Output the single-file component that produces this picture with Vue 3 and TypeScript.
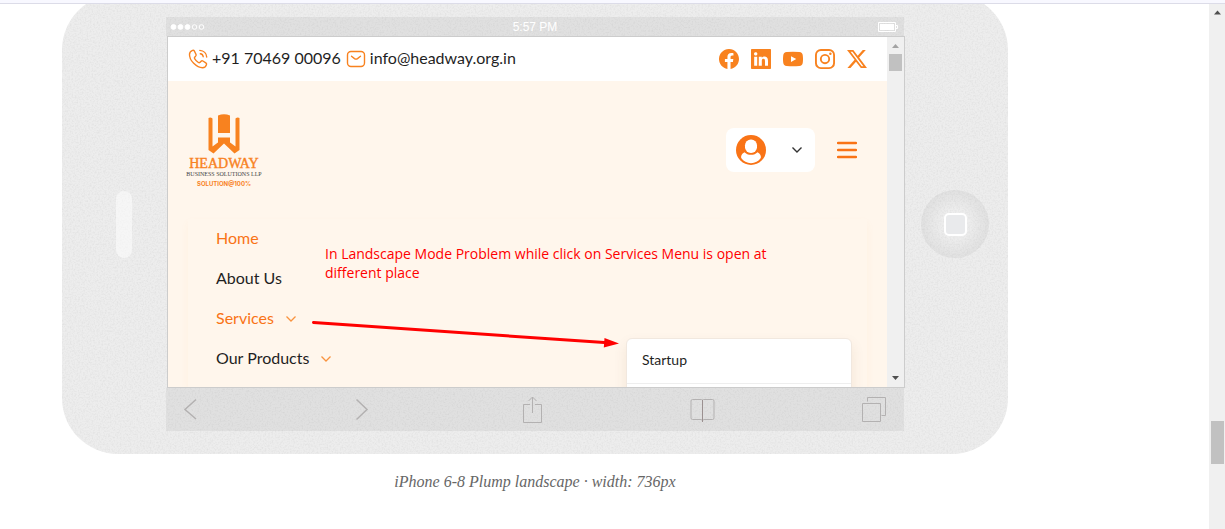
<script setup lang="ts">
interface SocialLink {
  name: string
  path: string
}

interface MenuItem {
  label: string
  active: boolean
  expandable: boolean
}

const socials: SocialLink[] = [
  {
    name: 'Facebook',
    path: 'M16 8.049c0-4.446-3.582-8.05-8-8.05C3.58 0-.002 3.603-.002 8.05c0 4.017 2.926 7.347 6.75 7.951v-5.625h-2.03V8.05H6.75V6.275c0-2.017 1.195-3.131 3.022-3.131.876 0 1.791.157 1.791.157v1.98h-1.009c-.993 0-1.303.621-1.303 1.258v1.51h2.218l-.354 2.326H9.25V16c3.824-.604 6.75-3.934 6.75-7.951',
  },
  {
    name: 'LinkedIn',
    path: 'M0 .6C0 .25.25 0 .6 0h14.8c.35 0 .6.25.6.6v14.8c0 .35-.25.6-.6.6H.6c-.35 0-.6-.25-.6-.6zm4.943 12.794V6.169H2.542v7.225zm-1.2-8.212c.837 0 1.358-.554 1.358-1.248-.015-.709-.52-1.248-1.342-1.248S2.4 3.226 2.4 3.934c0 .694.521 1.248 1.327 1.248zm4.908 8.212V9.359c0-.216.016-.432.08-.586.173-.431.568-.878 1.232-.878.869 0 1.216.662 1.216 1.634v3.865h2.401V9.25c0-2.22-1.184-3.252-2.764-3.252-1.274 0-1.845.7-2.165 1.193v.025h-.016l.016-.025V6.169h-2.4c.03.678 0 7.225 0 7.225z',
  },
  {
    name: 'YouTube',
    path: 'M3 2.4Q8 1.9 13 2.4 15.6 2.6 15.8 5 16.2 8 15.8 11 15.6 13.3 13 13.6 8 14 3 13.6.4 13.3.2 11-.2 8 .2 5 .4 2.6 3 2.4zM6.4 5.7v4.6L10.6 8z',
  },
  {
    name: 'Instagram',
    path: 'M4.7 0h6.6A4.7 4.7 0 0 1 16 4.7v6.6a4.7 4.7 0 0 1-4.7 4.7H4.7A4.7 4.7 0 0 1 0 11.3V4.7A4.7 4.7 0 0 1 4.7 0zm.1 1.5A3.3 3.3 0 0 0 1.5 4.8v6.4a3.3 3.3 0 0 0 3.3 3.3h6.4a3.3 3.3 0 0 0 3.3-3.3V4.8a3.3 3.3 0 0 0-3.3-3.3zM8 3.9a4.1 4.1 0 1 1 0 8.2 4.1 4.1 0 0 1 0-8.2zm0 1.5a2.6 2.6 0 1 0 0 5.2 2.6 2.6 0 0 0 0-5.2zm4.3-2.7a1 1 0 1 1 0 2 1 1 0 0 1 0-2z',
  },
  {
    name: 'X',
    path: 'M12.6.75h2.454l-5.36 6.142L16 15.25h-4.937l-3.867-5.07-4.425 5.07H.316l5.733-6.57L0 .75h5.063l3.495 4.633L12.601.75Zm-.86 13.028h1.36L4.323 2.145H2.865z',
  },
]

const menu: MenuItem[] = [
  { label: 'Home', active: true, expandable: false },
  { label: 'About Us', active: false, expandable: false },
  { label: 'Services', active: true, expandable: true },
  { label: 'Our Products', active: false, expandable: true },
]
</script>

<template>
  <div class="window">
    <div class="strip"></div>
    <div class="body">
      <main class="content">
        <figure class="preview">
          <div class="device">
            <svg class="grain" aria-hidden="true">
              <filter id="grain">
                <feTurbulence type="fractalNoise" baseFrequency="0.6" numOctaves="2" seed="4" />
                <feColorMatrix values="0 0 0 0 0  0 0 0 0 0  0 0 0 0 0  0.1 0 0 0 -0.04" />
              </filter>
              <rect width="100%" height="100%" filter="url(#grain)" />
            </svg>
            <div class="side side-left"><span class="speaker"></span></div>
            <div class="screen">
              <div class="status">
                <svg width="36" height="8" viewBox="0 0 36 8" aria-hidden="true">
                  <g fill="#fff" stroke="#fff">
                    <circle cx="3.500" cy="4" r="2.400" /><circle cx="10.500" cy="4" r="2.400" /><circle cx="17.500" cy="4" r="2.400" />
                    <circle cx="24.500" cy="4" r="2.300" fill="none" /><circle cx="31.500" cy="4" r="2.300" fill="none" />
                  </g>
                </svg>
                <span class="time">5:57 PM</span>
                <svg class="battery" width="20" height="10" viewBox="0 0 20 10" aria-hidden="true">
                  <path d="M.5.5h17v9H.5zM18 3.5h1.5v3H18" fill="none" stroke="#fff" />
                  <path d="M2 2h14v6H2z" fill="#fff" />
                </svg>
              </div>

              <div class="viewport">
                <div class="site">
                  <div class="contact">
                    <a class="contact-link" href="#phone">
                      <svg class="phone" viewBox="0 0 20 20" aria-hidden="true">
                        <path d="M4.6 1.3c-1.6.5-3 1.9-3.1 3.8-.2 3.200 1.700 6.700 4.200 9.200s5.800 4.400 8.800 4.400c2 0 3.500-1.300 4-3.100.2-.7-.1-1.300-.7-1.700l-2.900-1.900c-.6-.4-1.300-.3-1.800.2l-1.200 1.200c-.5.4-1 .4-1.500.1-1.500-1-2.900-2.300-3.800-3.800-.3-.5-.3-1 .1-1.500l1.100-1.300c.4-.5.5-1.200.1-1.700L6.300 1.900c-.4-.6-1-.8-1.700-.6z" />
                        <path d="M12.300 4.800c1.500.2 2.700 1.300 2.900 2.900M11.800 1.400c4 .2 6.700 3 6.900 6.600" />
                      </svg>
                      <span>+91 70469 00096</span>
                    </a>
                    <a class="contact-link" href="#mail">
                      <svg class="mail" viewBox="0 0 20 18" aria-hidden="true">
                        <rect x="1.500" y="1.500" width="17" height="15" rx="3.500" />
                        <path d="M5.500 6.300l3 2.300q1.500 1 3 0l3-2.300" />
                      </svg>
                      <span>info@headway.org.in</span>
                    </a>
                    <nav class="socials" aria-label="Social links">
                      <a v-for="s in socials" :key="s.name" href="#social" :aria-label="s.name">
                        <svg width="20" height="20" viewBox="0 0 16 16" aria-hidden="true">
                          <path :d="s.path" fill="#f8821f" fill-rule="evenodd" />
                        </svg>
                      </a>
                    </nav>
                  </div>

                  <header class="header">
                    <a class="logo" href="#home">
                      <svg width="32" height="40" viewBox="0 0 32 40" aria-hidden="true">
                        <g fill="#f8821f">
                          <path d="M.5 4q2-1 4 .5V32.500L16 24l11.500 8.500V4.500Q29.500 3 31.500 4v32l-5 3.500L16 29.500 5.500 39.500l-5-3.500z" />
                          <path d="M10 1.500q6-2.500 12 0V19H10z" />
                          <path d="M10 23.500h12v7l-6-5-6 5z" />
                        </g>
                      </svg>
                      <span class="logo-name">HEADWAY</span>
                      <span class="logo-sub">BUSINESS SOLUTIONS LLP</span>
                      <span class="logo-tag">SOLUTION@100%</span>
                    </a>
                    <div class="actions">
                      <button class="account" type="button" aria-label="Account">
                        <svg width="30" height="30" viewBox="0 0 30 30" aria-hidden="true">
                          <circle cx="15" cy="15" r="15" fill="#f97316" />
                          <rect x="9" y="4.500" width="12" height="13.500" rx="5.800" fill="#fff" />
                          <path d="M8.500 17.200C5.500 18.500 4.800 21 5.200 23c2.300 3.300 5.800 5.200 9.800 5.200s7.500-1.900 9.800-5.200c.4-2-.3-4.500-3.300-5.800-1.500 1.600-3.800 2.600-6.500 2.600s-5-1-6.500-2.600z" fill="#fff" />
                        </svg>
                        <svg width="12" height="8" viewBox="0 0 12 8" aria-hidden="true">
                          <path d="M1.500 1.500L6 6l4.500-4.500" fill="none" stroke="#333" stroke-width="1.400" />
                        </svg>
                      </button>
                      <button class="burger" type="button" aria-label="Menu">
                        <svg width="20" height="18" viewBox="0 0 20 18" aria-hidden="true">
                          <path d="M1 2h18M1 9h18M1 16h18" stroke="#f97316" stroke-width="2.400" stroke-linecap="round" />
                        </svg>
                      </button>
                    </div>
                  </header>

                  <nav class="panel" aria-label="Main menu">
                    <a v-for="m in menu" :key="m.label" class="item" :class="{ active: m.active }" href="#menu">
                      <span>{{ m.label }}</span>
                      <svg v-if="m.expandable" width="12" height="8" viewBox="0 0 12 8" aria-hidden="true">
                        <path d="M1.500 1.500L6 6l4.500-4.500" fill="none" stroke="#f9933f" stroke-width="1.300" />
                      </svg>
                    </a>
                  </nav>

                  <div class="submenu">
                    <a href="#startup">Startup</a>
                  </div>

                  <p class="note">In Landscape Mode Problem while click on Services Menu is open at different place</p>
                  <svg class="arrow" width="315" height="35" viewBox="0 0 315 35" aria-hidden="true">
                    <path d="M5.500 5.500L300 25.800" fill="none" stroke="#f00" stroke-width="3" stroke-linecap="round" />
                    <path d="M296.500 21L311 26.500 295.800 30.500z" fill="#f00" />
                  </svg>
                </div>
                <div class="rail" aria-hidden="true">
                  <svg width="17" height="17" viewBox="0 0 17 17"><path d="M5 11l3.500-4 3.500 4z" fill="#a3a3a3" /></svg>
                  <div class="rail-thumb"></div>
                  <svg class="rail-down" width="17" height="17" viewBox="0 0 17 17"><path d="M5 6l3.500 4L12 6z" fill="#505050" /></svg>
                </div>
              </div>

              <div class="toolbar">
                <button type="button" aria-label="Back">
                  <svg class="chevron" width="26" height="28" viewBox="0 0 26 28"><path d="M18 4.500L7 14.500l11 9.500" /></svg>
                </button>
                <button type="button" aria-label="Forward">
                  <svg class="chevron" width="26" height="28" viewBox="0 0 26 28"><path d="M7.500 4.500L18 14.500 7.500 24.500" /></svg>
                </button>
                <button type="button" aria-label="Share">
                  <svg width="26" height="28" viewBox="0 0 26 28"><path d="M10 9.500H3.500v18h18v-18H15M12.500 18V2M8.500 6l4-4 4 4" /></svg>
                </button>
                <button type="button" aria-label="Bookmarks">
                  <svg width="26" height="28" viewBox="0 0 26 28">
                    <path d="M12.500 5.500q0-1-1-1H2.500q-1.500 0-1.500 1.500v17q0 1.500 1.500 1.500h9l1 1.500 1-1.500h9q1.500 0 1.500-1.500V6q0-1.500-1.500-1.500h-9q-1 0-1 1z" />
                    <path class="spine" d="M12.500 5v22" />
                  </svg>
                </button>
                <button type="button" aria-label="Tabs">
                  <svg width="26" height="28" viewBox="0 0 26 28"><path d="M1.500 8.500h18v18h-18zM6.500 6.500v-4h18v18h-4" /></svg>
                </button>
              </div>
            </div>
            <div class="side"><span class="home"><span class="home-mark"></span></span></div>
          </div>
          <figcaption class="caption">iPhone 6-8 Plump landscape · width: 736px</figcaption>
        </figure>
      </main>
      <div class="scrollbar" aria-hidden="true">
        <svg width="16" height="17" viewBox="0 0 16 17"><path d="M5 10.500l3.500-4 3.500 4z" fill="#505050" /></svg>
        <div class="scroll-thumb"></div>
      </div>
    </div>
  </div>
</template>

<style>
body {
  background: #fff;
}
</style>

<style scoped>
* {
  box-sizing: border-box;
}
a {
  color: inherit;
  text-decoration: none;
}
button {
  border: 0;
  padding: 0;
  background: none;
  font: inherit;
}
svg {
  display: block;
  flex: none;
}
.window {
  display: flex;
  flex-direction: column;
  height: 100vh;
  overflow: hidden;
  font-family: Lato, "Liberation Sans", sans-serif;
  font-size: 16px;
  line-height: 20px;
  color: #1f1f1f;
}
.strip {
  flex: none;
  height: 4px;
  background: #f8f8ff;
  border-bottom: 1px solid #dcdce8;
}
.body {
  flex: 1;
  display: flex;
  min-height: 0;
}
.content {
  flex: 1;
  min-width: 0;
  overflow: hidden;
}
.preview {
  margin: -10px 201px 0 62px;
}
.device {
  position: relative;
  display: flex;
  align-items: center;
  padding: 23px 0;
  background: #ededed;
  border-radius: 56px;
  overflow: hidden;
}
.grain {
  position: absolute;
  inset: 0;
  width: 100%;
  height: 100%;
}
.side {
  position: relative;
  flex: none;
  width: 104px;
  display: flex;
  justify-content: center;
  padding-right: 2px;
}
.side-left {
  padding: 0 0 0 20px;
}
.speaker {
  width: 16px;
  height: 67px;
  border-radius: 8px;
  background: rgba(255, 255, 255, 0.5);
}
.home {
  width: 68px;
  height: 68px;
  border-radius: 50%;
  display: flex;
  align-items: center;
  justify-content: center;
  background: radial-gradient(circle, rgba(0, 0, 0, 0) 30%, rgba(0, 0, 0, 0.05) 70%);
}
.home-mark {
  width: 23px;
  height: 23px;
  border: 2px solid #fff;
  border-radius: 5px;
  background: #e9eaec;
}
.screen {
  position: relative;
  flex: 1;
  min-width: 0;
}
.status {
  height: 19px;
  display: grid;
  grid-template-columns: 1fr auto 1fr;
  align-items: center;
  padding: 0 4px;
  background: rgba(0, 0, 0, 0.05);
}
.time {
  font: 12px/20px "Liberation Sans", sans-serif;
  color: #fff;
}
.battery {
  justify-self: end;
  margin-right: 2px;
}
.viewport {
  display: flex;
  margin: 0 -1px 0 1px;
  border: 1px solid #ccc;
  background: #fff6ec;
  overflow: hidden;
}
.site {
  position: relative;
  flex: 1;
  min-width: 0;
}
.contact {
  height: 44px;
  padding: 0 20px;
  display: flex;
  align-items: center;
  gap: 5px;
  background: #fff;
}
.contact-link {
  display: flex;
  align-items: center;
  gap: 4px;
  white-space: nowrap;
}
.contact-link span,
.item span {
  padding-bottom: 2px;
}
.phone,
.mail {
  width: 20px;
  height: 20px;
  fill: none;
  stroke: #f8821f;
  stroke-width: 1.4;
  stroke-linecap: round;
}
.mail {
  height: 18px;
}
.socials {
  margin-left: auto;
  display: flex;
  gap: 12px;
}
.header {
  height: 138px;
  padding: 0 20px;
  display: flex;
  align-items: center;
  justify-content: space-between;
}
.logo {
  width: 72px;
  display: flex;
  flex-direction: column;
  align-items: center;
  color: #f8821f;
  white-space: nowrap;
}
.logo-name {
  margin-top: 3px;
  font: 14px/14px "Liberation Serif", serif;
  -webkit-text-stroke: 0.4px #f8821f;
}
.logo-sub {
  font: 6px/6px "Liberation Serif", serif;
  color: #444;
}
.logo-tag {
  margin-top: 4px;
  font: 700 6px/6px Inter, sans-serif;
}
.actions {
  display: flex;
  align-items: center;
  gap: 12px;
}
.account {
  display: flex;
  align-items: center;
  gap: 25px;
  height: 44px;
  padding: 0 12px 0 10px;
  border-radius: 8px;
  background: #fff;
}
.burger {
  width: 40px;
  height: 44px;
  display: flex;
  align-items: center;
  justify-content: center;
}
.panel {
  margin: 0 20px;
  padding: 0 28px 8px;
  box-shadow: 0 4px 8px rgba(249, 147, 63, 0.06);
}
.item {
  height: 40px;
  display: flex;
  align-items: center;
  gap: 11px;
}
.active {
  color: #f97316;
}
.submenu {
  position: absolute;
  top: 301px;
  right: 35px;
  width: 226px;
  height: 120px;
  border: 1px solid #f1e8df;
  border-radius: 6px;
  background: #fff;
  box-shadow: 0 6px 14px rgba(120, 70, 20, 0.09);
}
.submenu a {
  display: block;
  padding: 11px 15px 13px;
  border-bottom: 1px solid #eee;
  font-size: 14px;
}
.note {
  position: absolute;
  top: 207px;
  left: 157px;
  width: 450px;
  margin: 0;
  font: 14px/19px "Open Sans", sans-serif;
  color: #f00;
}
.arrow {
  position: absolute;
  top: 280px;
  left: 140px;
}
.rail {
  flex: none;
  width: 17px;
  display: flex;
  flex-direction: column;
  background: #f0f0f0;
}
.rail-thumb {
  height: 17px;
  margin: 0 2px;
  background: #c1c1c1;
}
.rail-down {
  margin-top: auto;
}
.toolbar {
  height: 43px;
  padding: 0 17px 2px 12px;
  display: flex;
  align-items: center;
  justify-content: space-between;
  background: rgba(0, 0, 0, 0.05);
}
.toolbar svg {
  fill: none;
  stroke: #b3b1b1;
}
.toolbar .chevron {
  stroke-width: 1.5;
}
.toolbar .spine {
  stroke: #9b9090;
}
.caption {
  margin-top: 18px;
  text-align: center;
  font: italic 16px/20px "Liberation Serif", serif;
  color: #666;
}
.scrollbar {
  flex: none;
  width: 16px;
  display: flex;
  flex-direction: column;
  background: #f0f0f0;
}
.scroll-thumb {
  height: 43px;
  margin: auto 1px 65px 2px;
  background: #c1c1c1;
}
</style>
